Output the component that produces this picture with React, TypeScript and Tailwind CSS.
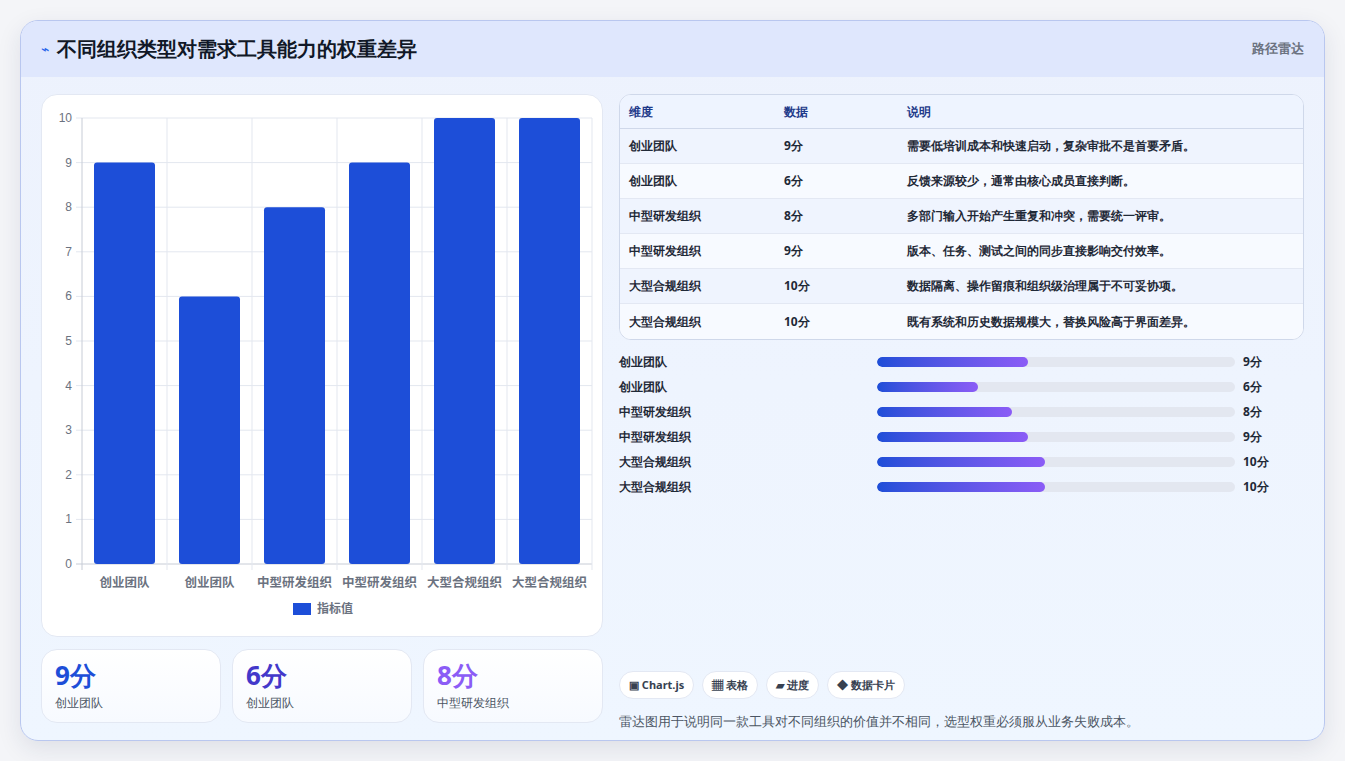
import React from 'react';

const rows = [
  { name: '创业团队', v: 9, note: '需要低培训成本和快速启动，复杂审批不是首要矛盾。' },
  { name: '创业团队', v: 6, note: '反馈来源较少，通常由核心成员直接判断。' },
  { name: '中型研发组织', v: 8, note: '多部门输入开始产生重复和冲突，需要统一评审。' },
  { name: '中型研发组织', v: 9, note: '版本、任务、测试之间的同步直接影响交付效率。' },
  { name: '大型合规组织', v: 10, note: '数据隔离、操作留痕和组织级治理属于不可妥协项。' },
  { name: '大型合规组织', v: 10, note: '既有系统和历史数据规模大，替换风险高于界面差异。' },
];

function BarChart() {
  const x0 = 40, x1 = 550, yTop = 23, yBot = 469;
  const step = (x1 - x0) / 6;
  const unit = (yBot - yTop) / 10;
  return (
    <svg width="562" height="543" viewBox="0 0 562 543" className="block">
      {Array.from({ length: 11 }, (_, i) => (
        <g key={i}>
          <line x1={x0 - 6} x2={x1} y1={yBot - i * unit} y2={yBot - i * unit} stroke={i === 0 ? '#c7ccd6' : '#e3e7ef'} />
          <text x={x0 - 10} y={yBot - i * unit + 4} textAnchor="end" fontSize="12" fill="#6b7280" fontFamily="Liberation Sans, Noto Sans CJK SC, sans-serif">{i}</text>
        </g>
      ))}
      {Array.from({ length: 7 }, (_, i) => (
        <line key={i} x1={x0 + i * step} x2={x0 + i * step} y1={yTop} y2={yBot + 6} stroke={i === 0 ? '#c7ccd6' : '#e3e7ef'} />
      ))}
      {rows.map((r, i) => {
        const h = r.v * unit;
        return (
          <g key={i}>
            <rect x={x0 + i * step + 12} y={yBot - h} width={61} height={h} rx={3} fill="#1d4ed8" />
            <text x={x0 + i * step + step / 2} y={yBot + 23} textAnchor="middle" fontSize="12.5" fontWeight="700" fill="#6b7280" fontFamily="Noto Sans CJK SC, sans-serif">{r.name}</text>
          </g>
        );
      })}
      <rect x={251} y={508} width={18} height={12} fill="#1d4ed8" />
      <text x={275} y={518} fontSize="12" fontWeight="700" fill="#6b7280" fontFamily="Noto Sans CJK SC, sans-serif">指标值</text>
    </svg>
  );
}

export default function App() {
  return (
    <div className="min-h-[761px] bg-[#f4f5f8] p-5 font-['Liberation_Sans','Noto_Sans_CJK_SC',sans-serif]">
      <div className="h-[721px] rounded-[18px] border border-[#b9c7ef] bg-gradient-to-b from-[#edf2fd] to-[#eff6ff] shadow-[0_8px_24px_rgba(30,41,80,0.10)] overflow-hidden flex flex-col">
        <div className="h-[56px] shrink-0 bg-[#dfe7fd] flex items-center justify-between px-5">
          <div className="flex items-center gap-2">
            <span className="text-[#2563eb] text-sm">⌁</span>
            <h1 className="text-[20px] font-bold text-[#111827]">不同组织类型对需求工具能力的权重差异</h1>
          </div>
          <span className="text-[13px] font-bold text-[#6b7280]">路径雷达</span>
        </div>
        <div className="flex gap-4 px-5 pt-[17px]">
          <div className="w-[562px] shrink-0 flex flex-col gap-3">
            <div className="h-[543px] rounded-2xl bg-white border border-[#e3e8f3]">
              <BarChart />
            </div>
            <div className="grid grid-cols-3 gap-[11px]">
              {[
                { v: '9分', n: '创业团队', c: 'text-[#1d4ed8]' },
                { v: '6分', n: '创业团队', c: 'text-[#4338ca]' },
                { v: '8分', n: '中型研发组织', c: 'text-[#8b5cf6]' },
              ].map((s, i) => (
                <div key={i} className="h-[74px] rounded-2xl border border-[#e3e8f3] bg-gradient-to-b from-white to-[#f7faff] px-[13px] pt-[8px]">
                  <div className={`text-[26px] font-bold leading-[34px] ${s.c}`}>{s.v}</div>
                  <div className="text-[12px] text-[#4b5563] mt-[2px]">{s.n}</div>
                </div>
              ))}
            </div>
          </div>
          <div className="flex-1 flex flex-col">
            <div className="rounded-xl border border-[#cfd8ea] overflow-hidden bg-white">
              <div className="flex h-[34px] items-center bg-[#eef4ff] border-b border-[#cfd8ea] text-[12px] font-bold text-[#1e3a8a]">
                <div className="w-[164px] pl-[9px]">维度</div>
                <div className="w-[123px]">数据</div>
                <div>说明</div>
              </div>
              {rows.map((r, i) => (
                <div key={i} className={`flex h-[35px] items-center text-[12px] font-bold text-[#1f2937] ${i < 5 ? 'border-b border-[#e3e8f3]' : ''} ${i % 2 === 0 ? 'bg-[#eff4fe]' : 'bg-[#f7faff]'}`}>
                  <div className="w-[164px] pl-[9px]">{r.name}</div>
                  <div className="w-[123px]">{r.v}分</div>
                  <div>{r.note}</div>
                </div>
              ))}
            </div>
            <div className="mt-[9px] flex flex-col">
              {rows.map((r, i) => (
                <div key={i} className="flex h-[25px] items-center text-[12px] font-bold text-[#1f2937]">
                  <div className="w-[258px]">{r.name}</div>
                  <div className="w-[358px] h-[10px] rounded-full bg-[#e3e7f0] overflow-hidden">
                    <div className="h-full rounded-full bg-gradient-to-r from-[#1d4ed8] to-[#8b5cf6]" style={{ width: `${r.v * 4.7}%` }} />
                  </div>
                  <div className="ml-2">{r.v}分</div>
                </div>
              ))}
            </div>
            <div className="mt-[172px] flex gap-2">
              {['▣ Chart.js', '▦ 表格', '▰ 进度', '◆ 数据卡片'].map((t) => (
                <span key={t} className="h-[28px] px-[9px] rounded-full bg-white border border-[#e3e8f3] flex items-center text-[11px] font-bold text-[#374151]">{t}</span>
              ))}
            </div>
            <p className="mt-[13px] text-[13px] text-[#4b5563]">雷达图用于说明同一款工具对不同组织的价值并不相同，选型权重必须服从业务失败成本。</p>
          </div>
        </div>
      </div>
    </div>
  );
}
